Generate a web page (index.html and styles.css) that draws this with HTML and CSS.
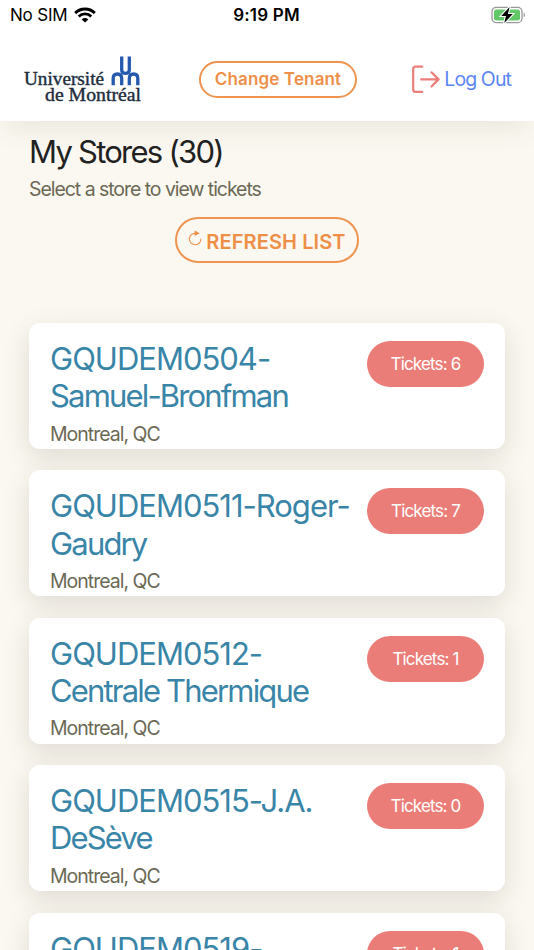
FILE: index.html
```
<!DOCTYPE html>
<html lang="en">
<head>
  <meta charset="UTF-8" />
  <meta name="viewport" content="width=device-width, initial-scale=1" />
  <title>My Stores</title>
  <link rel="stylesheet" href="styles.css">
</head>
<body>

  <header class="header">
    <div class="status-bar">
      <div class="carrier">
        <span>No SIM</span>
        <svg class="wifi" viewBox="0 0 22 16" width="22" height="16">
          <path d="M1.2 6.1 A14 14 0 0 1 20.8 6.1" fill="none" stroke="#000" stroke-width="3" />
          <path d="M4.7 9.5 A9 9 0 0 1 17.3 9.5" fill="none" stroke="#000" stroke-width="2.7" />
          <path d="M11 15.6 L7.7 12.4 A4.7 4.7 0 0 1 14.3 12.4 Z" />
        </svg>
      </div>
      <span class="time">9:19 PM</span>
      <svg class="battery" viewBox="0 0 35 18" width="35" height="18">
        <rect x="1" y="1.4" width="30" height="15.2" rx="4.2" fill="#fff" stroke="#999" stroke-width="1.3" />
        <rect x="3" y="3.4" width="26" height="11.2" rx="2.4" fill="#62c766" />
        <path d="M32.7 6.6 C34.4 7.2 34.4 10.8 32.7 11.4 Z" fill="#999" />
        <path d="M18.6 .9 L10.2 10 H15 L13.2 17.1 L21.8 8 H16.9 Z" stroke="#fff" stroke-width="2.2" paint-order="stroke" />
      </svg>
    </div>

    <nav class="navbar">
      <svg class="logo" viewBox="0 0 120 50" width="120" height="50">
        <g fill="#1e2c3c" font-family="'Liberation Serif', serif" font-size="18.5" stroke="#1e2c3c" stroke-width=".4">
          <text x="1" y="30" textLength="80" lengthAdjust="spacingAndGlyphs">Université</text>
          <text x="22" y="46" textLength="96" lengthAdjust="spacingAndGlyphs">de Montréal</text>
        </g>
        <g fill="none" stroke="#2459ad" stroke-width="3.3">
          <path d="M98.7 1.6 V15 Q98.7 18.4 102.5 18.4 Q106.3 18.4 106.3 15 V1.6" />
          <path d="M90.2 30.2 V23.4 Q90.2 19 94.4 19 Q98.7 19 98.7 23.4 V30.2" />
          <path d="M106.3 30.2 V23.4 Q106.3 19 110.6 19 Q114.8 19 114.8 23.4 V30.2" />
        </g>
      </svg>
      <button class="btn-outline change">Change Tenant</button>
      <a class="logout">
        <svg viewBox="0 0 28 28" width="28" height="28" fill="none" stroke="#ec7e7a" stroke-width="2.2" stroke-linecap="round" stroke-linejoin="round">
          <path d="M10.2 1.7 H3.6 Q1.2 1.7 1.2 4.1 V24.4 Q1.2 26.8 3.6 26.8 H10.2" />
          <path d="M9.2 14.4 H26.6 M19.5 7.3 L26.6 14.4 L19.5 21.5" />
        </svg>
        <span>Log Out</span>
      </a>
    </nav>
  </header>

  <main class="content">
    <h1>My Stores (30)</h1>
    <p class="subtitle">Select a store to view tickets</p>
    <button class="btn-outline refresh">
      <svg viewBox="0 0 14 16" width="14" height="16">
        <path d="M7.2 3.2 A5.8 5.8 0 1 0 12.9 8.6" fill="none" stroke="#ee8f48" stroke-width="1.1" />
        <path d="M6.6 .4 L11.8 3.2 L6.6 6 Z" fill="#ee8f48" />
      </svg>
      <span>REFRESH LIST</span>
    </button>

    <div class="stores">
      <div class="card">
        <div class="info">
          <h2>GQUDEM0504-<br><span>Samuel-Bronfman</span></h2>
          <p>Montreal, QC</p>
        </div>
        <button class="tickets">Tickets: 6</button>
      </div>
      <div class="card">
        <div class="info">
          <h2>GQUDEM0511-Roger-<br><span>Gaudry</span></h2>
          <p>Montreal, QC</p>
        </div>
        <button class="tickets">Tickets: 7</button>
      </div>
      <div class="card">
        <div class="info">
          <h2>GQUDEM0512-<br><span>Centrale Thermique</span></h2>
          <p>Montreal, QC</p>
        </div>
        <button class="tickets">Tickets: 1</button>
      </div>
      <div class="card">
        <div class="info">
          <h2>GQUDEM0515-J.A.<br><span>DeSève</span></h2>
          <p>Montreal, QC</p>
        </div>
        <button class="tickets">Tickets: 0</button>
      </div>
      <div class="card">
        <div class="info">
          <h2>GQUDEM0519-</h2>
        </div>
        <button class="tickets">Tickets: 1</button>
      </div>
    </div>
  </main>

</body>
</html>
```
FILE: styles.css
```
* {
  box-sizing: border-box;
  margin: 0;
  padding: 0;
}

body {
  height: 950px;
  overflow: hidden;
  background-color: #fbf8f1;
  font-family: Inter, 'Liberation Sans', sans-serif;
}

.header {
  height: 121px;
  background-color: #fff;
  box-shadow: 0 8px 30px -6px rgba(80, 75, 60, 0.14);
}

.status-bar {
  display: grid;
  grid-template-columns: 1fr auto 1fr;
  align-items: center;
  height: 30px;
  padding: 0 8px 0 10px;
  font-size: 17px;
}

.carrier {
  display: flex;
  align-items: center;
  gap: 7px;
  letter-spacing: -0.2px;
}

.time {
  margin-left: -3px;
  font-weight: 600;
  letter-spacing: 0.2px;
}

.battery {
  justify-self: end;
}

.navbar {
  display: flex;
  align-items: center;
  height: 98px;
  padding: 0 22px 0 23px;
}

.logo {
  margin-top: 2px;
}

.btn-outline {
  border: 2px solid #ee9450;
  border-radius: 30px;
  background-color: transparent;
  color: #ee8f48;
  font-family: inherit;
}

.change {
  width: 158px;
  height: 37px;
  margin-left: 56px;
  font-size: 17px;
  font-weight: 600;
  letter-spacing: 0.15px;
}

.logout {
  display: flex;
  align-items: center;
  gap: 4px;
  margin-left: auto;
  color: #5b87f3;
  font-size: 19.5px;
  letter-spacing: -0.9px;
}

.logout span {
  margin-right: 1px;
}

.content {
  display: flex;
  flex-direction: column;
  padding: 12px 29px 0;
}

h1 {
  font-size: 31px;
  font-weight: 400;
  line-height: 38px;
  letter-spacing: -1.75px;
  color: #212121;
}

.subtitle {
  margin-top: 6px;
  font-size: 19.5px;
  line-height: 24px;
  letter-spacing: -1.05px;
  color: #6b6955;
}

.refresh {
  display: flex;
  align-items: center;
  justify-content: center;
  gap: 4px;
  align-self: center;
  width: 184px;
  height: 46px;
  margin-top: 16px;
  font-size: 20px;
  font-weight: 600;
  letter-spacing: 0.1px;
}

.refresh svg {
  margin-top: -4px;
}

.refresh span {
  padding-top: 3px;
}

.stores {
  display: flex;
  flex-direction: column;
  gap: 21.4px;
  margin-top: 60px;
}

.card {
  display: flex;
  justify-content: space-between;
  align-items: flex-start;
  height: 126px;
  padding: 18px 21px 0;
  background-color: #fff;
  border-radius: 11px;
  box-shadow: 0 8px 26px rgba(80, 75, 60, 0.16);
}

.info {
  margin-top: -1px;
  white-space: nowrap;
}

h2 {
  font-size: 31px;
  font-weight: 400;
  line-height: 37.3px;
  letter-spacing: -1px;
  color: #3985a8;
}

h2 span {
  letter-spacing: -1.83px;
}

.info p {
  margin-top: 7px;
  font-size: 19.5px;
  line-height: 24px;
  letter-spacing: -1px;
  color: #6b6955;
}

.tickets {
  width: 117px;
  height: 46px;
  flex: none;
  border: none;
  border-radius: 23px;
  background-color: #eb7d79;
  color: #fff;
  font-family: inherit;
  font-size: 17px;
  letter-spacing: -0.85px;
}
```
